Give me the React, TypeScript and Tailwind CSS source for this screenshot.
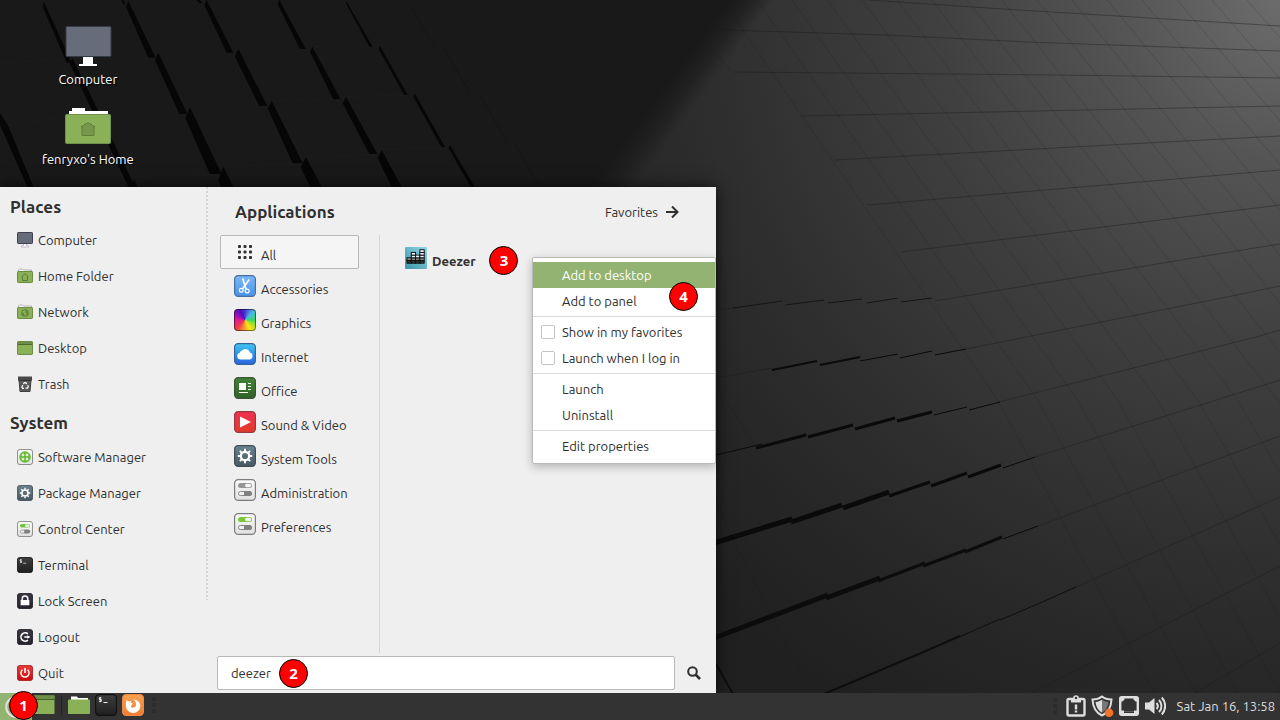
import type { ReactNode } from "react";

/* ---------- Wallpaper ---------- */

const leftGaps = [
  "132,6 128,20 200,188 215,188",
  "218,175 210,192 385,560 405,560",
  "385,3 378,20 445,173 467,173",
  "620,0 613,15 680,158 700,158",
  "838,0 833,12 900,147 917,147",
  "1040,5 1038,10 1108,140 1118,140",
  "475,158 465,180 538,342 562,342",
  "715,147 705,170 778,318 802,318",
  "937,140 930,155 1000,298 1022,298",
  "1140,138 1136,148 1213,285 1223,285",
  "570,322 556,355 630,522 665,522",
  "815,302 803,325 878,490 908,490",
  "1038,290 1028,310 1108,462 1132,462",
  "1245,281 1240,290 1324,441 1335,441",
  "670,500 655,540 663,560 700,560",
  "918,472 902,500 930,560 965,560",
  "1145,450 1133,475 1175,560 1205,560",
  "1350,435 1346,445 1412,560 1424,560",
  "0,340 0,375 82,560 100,560 25,378",
  "402,537 395,560 412,560",
  "588,0 598,9 606,9 600,0",
  "364,0 370,13 376,13 370,0",
];

const gridRows = [
  "869,0 1003,9 1280,26",
  "660,28 885,35 1028,42 1280,51",
  "734,72 1056,75 1280,78",
  "801,116 1085,110 1280,106",
  "835,160 1109,145 1280,136",
  "867,205 1140,182 1280,170",
  "901,252 1168,219 1280,205",
  "935,301 1199,257 1280,244",
  "966,349 1232,296 1280,286",
  "999,402 1260,336 1280,330",
  "1035,457 1280,380",
  "1038,526 1280,436",
  "1076,587 1280,497",
  "1032,693 1280,566",
  "1195,693 1280,643",
  "716,378 772,368",
  "716,310 735,308",
];

const rightGaps: { width: number; tone: string; lines: string }[] = [
  { width: 1, tone: "#151515", lines: "M733 308 782 301M785 305 824 300M828 303 862 299M867 303 898 298M901 302 932 298" },
  { width: 1, tone: "#0a0a0a", lines: "M860 361 898 354M900 358 932 351M935 355 966 349" },
  { width: 2, tone: "#0a0a0a", lines: "M772 370 817 361M820 365 860 357" },
  { width: 1, tone: "#0a0a0a", lines: "M716 455 762 444M934 415 967 407M969 410 1000 402" },
  { width: 3, tone: "#0a0a0a", lines: "M756 448 806 435M808 437 853 425M855 429 895 418M897 421 932 412" },
  { width: 5, tone: "#0a0a0a", lines: "M714 543 792 519M791 522 842 505M843 508 889 492" },
  { width: 3, tone: "#0a0a0a", lines: "M889 496 930 482M931 486 967 473M968 477 1001 465" },
  { width: 1, tone: "#0a0a0a", lines: "M1003 468 1035 457M1003 539 1038 526" },
  { width: 5, tone: "#0c0c0c", lines: "M714 638 828 595M826 598 880 578" },
  { width: 3, tone: "#0c0c0c", lines: "M878 581 925 563M923 566 966 550M965 552 1002 537" },
  { width: 2, tone: "#0e0e0e", lines: "M824 694 914 656M912 657 960 636M716 664 733 694" },
  { width: 1, tone: "#0e0e0e", lines: "M959 637 1000 619M1000 620 1040 603 1076 587" },
];

function Wallpaper() {
  const steep = Array.from({ length: 17 }, (_, i) => {
    const top = 722 + i * 35;
    const mid = 999 + i * 40;
    const low = 1154 + i * 42;
    return `M${top} 0L${mid} 402L${low} 693`;
  });
  return (
    <svg
      className="absolute inset-0 h-full w-full"
      viewBox="0 0 1280 720"
      preserveAspectRatio="xMidYMid slice"
      aria-hidden="true"
    >
      <defs>
        <radialGradient id="glow" gradientUnits="userSpaceOnUse" cx="1290" cy="-10" r="840">
          <stop offset="0" stopColor="#6e6e6e" />
          <stop offset="0.2" stopColor="#555555" />
          <stop offset="0.42" stopColor="#404040" />
          <stop offset="0.68" stopColor="#2f2f2f" />
          <stop offset="0.85" stopColor="#262626" />
          <stop offset="1" stopColor="#202020" />
        </radialGradient>
        <linearGradient id="shade" gradientUnits="userSpaceOnUse" x1="730" y1="0" x2="758" y2="21">
          <stop offset="0" stopColor="#191919" />
          <stop offset="0.5" stopColor="#191919" stopOpacity="0.6" />
          <stop offset="1" stopColor="#191919" stopOpacity="0" />
        </linearGradient>
      </defs>
      <rect width="1280" height="720" fill="url(#glow)" />
      <path d="M0 0H800L560 320H0Z" fill="url(#shade)" />
      <g stroke="#1c1c1c" strokeWidth="1" fill="none" opacity="0.42">
        {gridRows.map((points) => (
          <polyline key={points} points={points} />
        ))}
      </g>
      <g stroke="#161616" strokeWidth="1" fill="none" opacity="0.16">
        {steep.map((d) => (
          <path key={d} d={d} />
        ))}
        <path d="M675 0 730 70M640 0 657 24M716 385 755 445M716 500 733 540 812 693" />
      </g>
      <g fill="none">
        {rightGaps.map((gap) => (
          <path key={gap.lines} d={gap.lines} stroke={gap.tone} strokeWidth={gap.width} />
        ))}
      </g>
      <g transform="scale(0.33333)">
        <path
          d="M0 190 210 176H465M475 158H700M715 147H917M937 140H1118M25 375 230 345H562M570 322 802 318M815 302 1022 298M1038 290 1223 285M405 530 665 522M670 500 908 490M918 472 1132 462M1145 450 1335 441"
          stroke="#1c1c1c"
          strokeWidth="3"
          fill="none"
        />
        <path d="M1232 18 1302 135M1330 140 1408 276M1440 285 1520 425M1545 432 1617 560" stroke="#121212" strokeWidth="2" fill="none" />
        <g fill="#060606">
          {leftGaps.map((points) => (
            <polygon key={points} points={points} />
          ))}
        </g>
      </g>
    </svg>
  );
}

/* ---------- Icons ---------- */

type IconProps = { size?: number };

function Svg({ size = 16, box = 16, children }: { size?: number; box?: number; children: ReactNode }) {
  return (
    <svg width={size} height={size} viewBox={`0 0 ${box} ${box}`} className="block shrink-0" fill="none" aria-hidden="true">
      {children}
    </svg>
  );
}

function Tile({ id, from, to, stroke, size, children }: { id: string; from: string; to: string; stroke: string; size: number; children?: ReactNode }) {
  return (
    <Svg size={size} box={22}>
      <defs>
        <linearGradient id={id} x1="0" y1="0" x2="0" y2="1">
          <stop offset="0" stopColor={from} />
          <stop offset="1" stopColor={to} />
        </linearGradient>
      </defs>
      <rect x="0.6" y="0.6" width="20.8" height="20.8" rx="3.6" fill={`url(#${id})`} stroke={stroke} strokeWidth="1.2" />
      {children}
    </Svg>
  );
}

function MonitorSmall() {
  return (
    <Svg>
      <path d="M6.500 11.500h3v2h1.500l1 1.500H4l1-1.500h1.500z" fill="#fafafc" stroke="#b9b9c8" strokeWidth="0.9" />
      <rect x="0.500" y="0.500" width="15" height="11" rx="0.700" fill="#666c7a" stroke="#40404e" />
    </Svg>
  );
}

function FolderSmall({ children }: { children?: ReactNode }) {
  return (
    <Svg>
      <path d="M1.500 4V2l1-1h3l1 1h8V4" fill="#fff" stroke="#b0b0b0" />
      <rect x="0.500" y="3.500" width="15" height="11" rx="0.700" fill="#8bb158" stroke="#6b8c40" />
      {children}
    </Svg>
  );
}

function HomeFolderIcon() {
  return (
    <FolderSmall>
      <path d="M4.500 9 8 5.700 11.500 9M5.500 8.500v4h5v-4" stroke="#5d7b38" />
    </FolderSmall>
  );
}

function NetworkFolderIcon() {
  return (
    <FolderSmall>
      <circle cx="8" cy="9" r="3.800" fill="#64843c" />
      <path d="M7.500 6 5 8l2 1.500 1 2.700 2-2.500-2-1.200 1-1z" fill="#8bb158" />
    </FolderSmall>
  );
}

function DesktopIcon() {
  return (
    <Svg>
      <rect x="0.500" y="1.500" width="15" height="13" rx="0.700" fill="#8bb158" stroke="#6b8c40" />
      <path d="M1 2h14v2H1z" fill="#728f4a" />
      <path d="M1 4.500h14" stroke="#4f692c" />
    </Svg>
  );
}

function TrashIcon() {
  return (
    <Svg>
      <path d="M2 4h12l-1 11.500H3z" fill="#5a5a5a" stroke="#404040" />
      <path d="M1 0.500h14V4.500H1z" fill="#484848" />
      <path d="M1.500 4.500h13" stroke="#353535" />
      <path d="m6.400 8.200 1-1.500h1.400l1 1.500M10.700 9.300l.6 1.500-.8 1.400H8.600M7 12.300H5.600l-.7-1.400.9-1.600" stroke="#fff" strokeWidth="1.200" />
    </Svg>
  );
}

function SoftwareIcon() {
  return (
    <Tile id="software" from="#fafafa" to="#e6e6e6" stroke="#777" size={16}>
      <circle cx="11" cy="11" r="8" fill="#6cbb38" />
      <g fill="#e4f3d8">
        <circle cx="8.200" cy="8.200" r="1.900" />
        <circle cx="13.800" cy="8.200" r="1.900" />
        <circle cx="8.200" cy="13.800" r="1.900" />
        <circle cx="13.800" cy="13.800" r="1.900" />
      </g>
    </Tile>
  );
}

function GearIcon({ size = 22 }: IconProps) {
  return (
    <Tile id={`gear${size}`} from="#6d8290" to="#465863" stroke="#414e57" size={size}>
      <circle cx="11" cy="11" r="4.200" stroke="#fff" strokeWidth="2.200" />
      <path
        d="M11 3.800v2.500M11 15.700v2.500M3.800 11h2.500M15.700 11h2.500M5.900 5.900l1.800 1.800M14.300 14.300l1.800 1.800M5.900 16.100l1.800-1.800M14.300 7.700l1.800-1.800"
        stroke="#fff"
        strokeWidth="2"
      />
    </Tile>
  );
}

function TogglesIcon({ size = 22, id, active }: IconProps & { id: string; active: string }) {
  return (
    <Tile id={id} from="#fcfcfc" to="#dfdfdf" stroke="#7c7c7c" size={size}>
      <rect x="4" y="4" width="14" height="5" rx="2.500" fill={active} />
      <rect x="11" y="4.800" width="6.200" height="3.400" rx="1.700" fill="#f4f4f4" />
      <rect x="4.500" y="12.500" width="13" height="4" rx="2" fill="#f0f0f0" stroke="#888" />
      <path d="M10 12h5.500a2.500 2.500 0 0 1 0 5H10z" fill="#808080" />
    </Tile>
  );
}

function TerminalIcon({ size = 16 }: IconProps) {
  return (
    <Tile id={`terminal${size}`} from="#3e3e3e" to="#1f1f1f" stroke="#101010" size={size}>
      <path d="M6.300 3.800H4.400v1.700h1.900v1.900H4.200M5.300 3v5.200M8.500 8.500h4" stroke="#f2f2f2" strokeWidth="1" />
    </Tile>
  );
}

function LockIcon() {
  return (
    <Tile id="lock" from="#3a3542" to="#27232d" stroke="#1f1b25" size={16}>
      <rect x="5" y="9.500" width="12" height="7.500" rx="0.800" fill="#fff" />
      <path d="M7.200 10V8a3.800 3.800 0 0 1 7.600 0v2" stroke="#fff" strokeWidth="2" />
    </Tile>
  );
}

function LogoutIcon() {
  return (
    <Tile id="logout" from="#3a3542" to="#27232d" stroke="#1f1b25" size={16}>
      <path d="M15 6.800A5.700 5.700 0 1 0 15 15.200" stroke="#fff" strokeWidth="2.200" />
      <path d="M10 11h7" stroke="#fff" strokeWidth="2" />
      <path d="m14 8.500 4 2.500-4 2.500z" fill="#fff" />
    </Tile>
  );
}

function QuitIcon() {
  return (
    <Tile id="quit" from="#e8403a" to="#c60b10" stroke="#a8181a" size={16}>
      <path d="M7.500 6.500a5.600 5.600 0 1 0 7 0" stroke="#fff" strokeWidth="2" />
      <path d="M11 4v7" stroke="#fff" strokeWidth="2.200" />
    </Tile>
  );
}

function AllIcon() {
  return (
    <Svg size={22} box={22}>
      <g fill="#303030">
        {[4, 9.5, 15].map((y) => [4, 9.5, 15].map((x) => <rect key={`${x}-${y}`} x={x} y={y} width="3" height="3" rx="0.900" />))}
      </g>
    </Svg>
  );
}

function ScissorsIcon() {
  return (
    <Tile id="accessories" from="#7ab8fb" to="#4a93e8" stroke="#466f9f" size={22}>
      <path d="M8.700 3.500 12 14M15.200 4.500 8.600 13.800" stroke="#fff" strokeWidth="1.700" />
      <circle cx="7.300" cy="15.300" r="1.900" stroke="#fff" strokeWidth="1.200" />
      <circle cx="13.200" cy="16" r="1.900" stroke="#fff" strokeWidth="1.200" />
    </Tile>
  );
}

function GraphicsIcon() {
  return (
    <span className="block size-[22px] shrink-0 rounded border border-black/50 bg-[conic-gradient(from_0deg,#4a35d8,#48b9e0_12%,#35d96a_25%,#a8e020_33%,#f6e81a_42%,#f59a28_52%,#f03f48_62%,#e01a90_75%,#8a0fc0_85%,#4a10b8_93%,#4a35d8)] bg-origin-border" />
  );
}

function CloudIcon() {
  return (
    <Tile id="internet" from="#3ec8f0" to="#2a62e2" stroke="#35649a" size={22}>
      <path d="M6.500 16.500a3.400 3.400 0 0 1-.6-6.700 3 3 0 0 1 2.700-2.500 4.300 4.300 0 0 1 7.300 2.200 3.600 3.600 0 0 1-.4 7z" fill="#fff" />
    </Tile>
  );
}

function OfficeIcon() {
  return (
    <Tile id="office" from="#418236" to="#2f6427" stroke="#3a5433" size={22}>
      <path d="M5 6h7v7H5z" fill="#fff" />
      <path d="M14 6.500h3M14 9.500h3M14 12.500h3M5 15.500h9" stroke="#fff" strokeWidth="1.200" />
    </Tile>
  );
}

function VideoIcon() {
  return (
    <Tile id="video" from="#f03050" to="#e23a2a" stroke="#963a40" size={22}>
      <path d="m6 5.500 11 5.500L6 16.500z" fill="#fff" />
    </Tile>
  );
}

function DeezerIcon() {
  const bars: [number, number][] = [[2, 2], [6.3, 4], [10.600, 3], [14.900, 5]];
  return (
    <Svg size={22} box={22}>
      <defs>
        <linearGradient id="deezer" x1="1" y1="0" x2="0" y2="1">
          <stop offset="0" stopColor="#8ed6e4" />
          <stop offset="1" stopColor="#3d93a8" />
        </linearGradient>
      </defs>
      <rect width="22" height="22" rx="1" fill="url(#deezer)" />
      {bars.map(([x, count]) =>
        Array.from({ length: count }, (_, i) => (
          <rect key={`${x}-${i}`} x={x} y={13.500 - i * 2.700} width="4.300" height="2.700" fill={i === 0 ? "#333" : i === 1 ? "#8a8a8a" : "#e8f4f6"} stroke="#080808" strokeWidth="0.900" />
        )),
      )}
    </Svg>
  );
}

/* ---------- Shared pieces ---------- */

function Marker({ value, className = "" }: { value: number; className?: string }) {
  return (
    <span
      className={`pointer-events-none flex size-[29px] items-center justify-center rounded-full border border-black bg-[#fe0000] font-['Noto_Sans',sans-serif] text-[15px] leading-none font-bold text-white ${className}`}
    >
      {value}
    </span>
  );
}

const places = [
  { label: "Computer", icon: <MonitorSmall /> },
  { label: "Home Folder", icon: <HomeFolderIcon /> },
  { label: "Network", icon: <NetworkFolderIcon /> },
  { label: "Desktop", icon: <DesktopIcon /> },
  { label: "Trash", icon: <TrashIcon /> },
];

const system = [
  { label: "Software Manager", icon: <SoftwareIcon /> },
  { label: "Package Manager", icon: <GearIcon size={16} /> },
  { label: "Control Center", icon: <TogglesIcon size={16} id="control" active="#6cc23a" /> },
  { label: "Terminal", icon: <TerminalIcon /> },
  { label: "Lock Screen", icon: <LockIcon /> },
  { label: "Logout", icon: <LogoutIcon /> },
  { label: "Quit", icon: <QuitIcon /> },
];

const categories = [
  { label: "All", icon: <AllIcon /> },
  { label: "Accessories", icon: <ScissorsIcon /> },
  { label: "Graphics", icon: <GraphicsIcon /> },
  { label: "Internet", icon: <CloudIcon /> },
  { label: "Office", icon: <OfficeIcon /> },
  { label: "Sound & Video", icon: <VideoIcon /> },
  { label: "System Tools", icon: <GearIcon /> },
  { label: "Administration", icon: <TogglesIcon id="admin" active="#969696" /> },
  { label: "Preferences", icon: <TogglesIcon id="prefs" active="#78c838" /> },
];

function SideItem({ icon, label }: { icon: ReactNode; label: string }) {
  return (
    <button type="button" className="flex h-9 w-full items-center gap-[5px] pl-[17px] text-left">
      {icon}
      {label}
    </button>
  );
}

function DesktopShortcut({ icon, label }: { icon: ReactNode; label: string }) {
  return (
    <button type="button" className="flex h-20 flex-col items-center text-white [text-shadow:1px_1px_1px_#000]">
      {icon}
      <span className="leading-5">{label}</span>
    </button>
  );
}

function MenuAction({ label, active = false }: { label: string; active?: boolean }) {
  return (
    <button
      type="button"
      role="menuitem"
      className={`flex h-[26px] w-full items-center pl-[29px] text-left ${active ? "bg-[#92b372] text-white" : ""}`}
    >
      {label}
    </button>
  );
}

function MenuCheck({ label }: { label: string }) {
  return (
    <label className="flex h-[26px] items-center gap-[7px] pl-2">
      <input type="checkbox" className="size-3.5 appearance-none rounded-xs border border-[#c4c4c4] bg-white checked:bg-[#92b372]" />
      {label}
    </label>
  );
}

function ContextMenu() {
  return (
    <div
      role="menu"
      className="absolute top-[70px] right-0 w-[184px] rounded-xs border border-[#bababa] bg-white py-1 shadow-[0_3px_10px_rgba(0,0,0,0.25)]"
    >
      <MenuAction label="Add to desktop" active />
      <MenuAction label="Add to panel" />
      <hr className="my-0.5 border-[#dcdcdc]" />
      <MenuCheck label="Show in my favorites" />
      <MenuCheck label="Launch when I log in" />
      <hr className="my-0.5 border-[#dcdcdc]" />
      <MenuAction label="Launch" />
      <MenuAction label="Uninstall" />
      <hr className="my-0.5 border-[#dcdcdc]" />
      <MenuAction label="Edit properties" />
      <Marker value={4} className="absolute top-6 right-[17px]" />
    </div>
  );
}

function StartMenu() {
  return (
    <section className="relative flex w-[716px] bg-[#efefef] text-[#303030] shadow-[0_0_14px_rgba(0,0,0,0.7)]" aria-label="Menu">
      <nav className="w-[206px] pb-0.5">
        <h2 className="h-[35px] pt-1 pl-2.5 text-[17px] leading-[31px] font-bold">Places</h2>
        {places.map((item) => (
          <SideItem key={item.label} {...item} />
        ))}
        <h2 className="h-[37px] pt-1 pl-2.5 text-[17px] leading-[33px] font-bold">System</h2>
        {system.map((item) => (
          <SideItem key={item.label} {...item} />
        ))}
      </nav>
      <div className="h-[413px] w-0.5 bg-[repeating-linear-gradient(to_bottom,#d4d4d4_0_2px,transparent_2px_4px)]" />
      <div className="flex flex-1 flex-col pl-[9px]">
        <header className="flex h-12 items-center justify-between pt-0.5 pr-[37px] pl-[18px]">
          <h2 className="text-[17px] font-bold">Applications</h2>
          <button type="button" className="flex items-center gap-2">
            Favorites
            <svg width="13" height="14" viewBox="0 0 13 14" fill="none" stroke="#303030" strokeWidth="2" aria-hidden="true">
              <path d="M0 7h11M6 1.500 11.500 7 6 12.500" />
            </svg>
          </button>
        </header>
        <div className="flex flex-1">
          <div className="w-[163px] border-r border-[#d6d6d6] pl-[3px]">
            {categories.map((item, i) => (
              <button
                type="button"
                key={item.label}
                className={`flex h-[34px] w-[139px] items-center gap-[5px] rounded-xs border pl-[13px] text-left whitespace-nowrap ${
                  i === 0 ? "border-[#b8b8b8] bg-[#f5f5f5]" : "border-transparent"
                }`}
              >
                {item.icon}
                <span className="pt-1.5">{item.label}</span>
              </button>
            ))}
          </div>
          <div className="flex h-[50px] items-center pl-[25px]">
            <button type="button" className="flex items-center gap-[5px] pb-1 font-bold">
              <DeezerIcon />
              <span className="pt-1.5">Deezer</span>
            </button>
            <Marker value={3} className="ml-3.5" />
          </div>
        </div>
        <form className="relative flex items-center gap-3 pt-[3px] pb-[3px]">
          <input
            type="text"
            aria-label="Search applications"
            defaultValue="deezer"
            className="h-[34px] w-[458px] rounded-xs border border-[#b8b8b8] bg-white px-[13px] outline-none"
          />
          <button type="button" aria-label="Search">
            <svg width="14" height="14" viewBox="0 0 14 14" fill="none" stroke="#303030" aria-hidden="true">
              <circle cx="5.500" cy="5.500" r="4.300" strokeWidth="2" />
              <path d="m8.500 8.500 4.500 4.500" strokeWidth="2.600" />
            </svg>
          </button>
          <Marker value={2} className="absolute top-1.5 left-[62px]" />
        </form>
      </div>
      <ContextMenu />
    </section>
  );
}

/* ---------- Taskbar ---------- */

function Dots() {
  return <span className="h-4 w-1 bg-[repeating-linear-gradient(to_bottom,#2c2c2c_0_4px,transparent_4px_6px)]" />;
}

function Taskbar() {
  return (
    <footer className="relative flex h-[27px] items-center justify-between bg-[#333333] pr-[5px]">
      <div className="flex h-full items-center">
        <button type="button" aria-label="Open menu" className="relative flex h-full w-8 items-center bg-[#92b372] pl-[5px]">
          <svg width="22" height="22" viewBox="0 0 22 22" fill="none" aria-hidden="true">
            <circle cx="11" cy="11" r="9.800" stroke="#e2e2e2" strokeWidth="2" />
          </svg>
          <Marker value={1} className="absolute -top-0.5 left-[9px] z-10" />
        </button>
        <div className="flex items-center pb-[3px]">
          <button type="button" aria-label="Show desktop">
            <svg width="23" height="20" viewBox="0 0 23 20" className="block" aria-hidden="true">
              <path d="M0 .5h22.500v18.500H0z" fill="#8bb158" />
              <path d="M0 .5h22.500v4H0z" fill="#6f8f47" />
              <path d="M0 4.500h23" stroke="#48602c" />
            </svg>
          </button>
          <span className="mx-1.5 h-5 w-px bg-[#222]" />
          <button type="button" aria-label="Files">
            <svg width="22" height="20" viewBox="0 0 22 20" className="block" aria-hidden="true">
              <path d="M3 5V1.500h6l1 1.500h10v3H3z" fill="#fff" />
              <rect y="4.500" width="22" height="14.500" rx="1" fill="#8bb158" />
            </svg>
          </button>
          <button type="button" aria-label="Terminal" className="ml-[5px]">
            <TerminalIcon size={22} />
          </button>
          <button type="button" aria-label="Firefox" className="ml-[5px]">
            <Tile id="firefox" from="#f8a352" to="#ef7c32" stroke="#ee8a42" size={22}>
              <path
                d="M4.300 6.200 7 7.600c.8-.6 1.600-.8 2.400-.6L8.500 8.800l2.300.8-1.500 1.800c-.9 1 .2 2.600 2.200 2.200 2-.5 3-2 2.500-4.200-.4-1.800-1.400-3-2.700-4 4.300.3 7 2.800 7 6.300a7.200 7.200 0 0 1-14.400.3c-.1-2.200.2-4 .4-5.800z"
                fill="#fff"
              />
            </Tile>
          </button>
          <span className="ml-2 flex">
            <Dots />
          </span>
        </div>
      </div>
      <div className="flex items-center gap-[5px] pb-px text-[#dedede]">
        <span className="mr-1 flex">
          <Dots />
        </span>
        <button type="button" aria-label="Notices">
          <svg width="20" height="22" viewBox="0 0 20 22" className="block" fill="none" aria-hidden="true">
            <rect x="1.500" y="4" width="17" height="16.500" rx="1.500" stroke="#dedede" strokeWidth="2.400" />
            <path d="M5 4h10v3.500H5z" fill="#dedede" />
            <circle cx="10" cy="3" r="2" stroke="#dedede" strokeWidth="1.600" fill="#333" />
            <path d="M10 9.500v5M10 15.500v2" stroke="#dedede" strokeWidth="2.400" />
          </svg>
        </button>
        <button type="button" aria-label="Updates">
          <svg width="23" height="22" viewBox="0 0 23 22" className="block" fill="none" aria-hidden="true">
            <path d="M11 1.500C8.500 3.500 5 4.500 1.500 4.500 1.800 11 4.500 17.500 11 20.500c6.500-3 9.200-9.500 9.500-16C17 4.500 13.500 3.500 11 1.500z" stroke="#dedede" strokeWidth="2" />
            <path d="M11 4.800C9 6 7 6.700 4.500 7 5 11.500 7 15.500 11 17.800z" fill="#dedede" />
            <path d="M11 4.800c2 1.200 4 1.900 6.500 2.200-.5 4.500-2.500 8.500-6.500 10.800z" fill="#777" />
            <circle cx="18" cy="17.700" r="4.300" fill="#f37329" />
          </svg>
        </button>
        <button type="button" aria-label="Network">
          <svg width="20" height="20" viewBox="0 0 20 20" className="block" fill="none" aria-hidden="true">
            <rect x="1.200" y="1.200" width="17.600" height="17.600" rx="1.500" fill="#333" stroke="#dedede" strokeWidth="2.400" />
            <path d="M2 2h3.500v1.500L3.500 5.500H2zM18 2h-3.500v1.500l2 2H18zM2 14.500h3v1.200h10v-1.200h3V18H2z" fill="#dedede" />
            <path d="M5 16h10v1H5z" fill="#333" />
          </svg>
        </button>
        <button type="button" aria-label="Volume">
          <svg width="22" height="20" viewBox="0 0 22 20" className="block" fill="none" aria-hidden="true">
            <path d="M1 6.500h4L10.500 2v16L5 13.500H1z" fill="#dedede" />
            <path d="M12.500 7a4.500 4.500 0 0 1 0 6M15 4a8.500 8.500 0 0 1 0 12M17.800 1.500a12.500 12.500 0 0 1 0 17" stroke="#dedede" strokeWidth="2" />
          </svg>
        </button>
        <time className="ml-1.5">Sat Jan 16, 13:58</time>
      </div>
    </footer>
  );
}

export default function App() {
  return (
    <div className="relative isolate flex min-h-screen flex-col overflow-hidden bg-[#181818] font-[Ubuntu,'Noto_Sans',sans-serif] text-[13px] leading-5">
      <div className="absolute inset-0 -z-10">
        <Wallpaper />
      </div>
      <main className="flex flex-1 flex-col items-start justify-between">
        <div className="flex flex-col items-center pt-6 pl-[42px]">
          <DesktopShortcut
            label="Computer"
            icon={
              <svg width="48" height="45" viewBox="0 0 48 45" aria-hidden="true">
                <path d="M19 32h10v8h4v2H15v-2h4z" fill="#fff" />
                <rect x="2" y="2.500" width="45" height="30" rx="1" fill="#666c7a" stroke="#343a46" strokeWidth="1" />
              </svg>
            }
          />
          <DesktopShortcut
            label="fenryxo's Home"
            icon={
              <svg width="48" height="45" viewBox="0 0 48 45" aria-hidden="true">
                <path d="M5 12V7h3V4h13v3h23v5z" fill="#fff" />
                <rect x="1.500" y="10.500" width="45" height="29" rx="1" fill="#8bb158" stroke="#70914a" />
                <path d="m24 18.500 7 4.500h-1v8.500H18V23h-1z" fill="#76974c" stroke="#5f7c3b" />
              </svg>
            }
          />
        </div>
        <StartMenu />
      </main>
      <Taskbar />
    </div>
  );
}
